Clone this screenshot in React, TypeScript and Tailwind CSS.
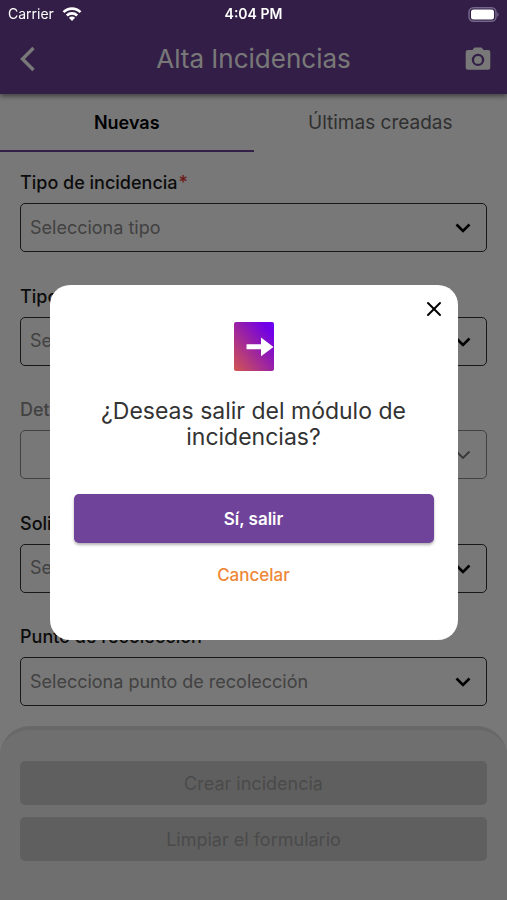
import { useState } from 'react';
import { X } from 'lucide-react';

const FIELDS = [
  { id: 'tipo', label: 'Tipo de incidencia', placeholder: 'Selecciona tipo', required: true },
  { id: 'servicio', label: 'Tipo de servicio', placeholder: 'Selecciona servicio' },
  { id: 'detalle', label: 'Detalle', placeholder: '', disabled: true },
  { id: 'solicitante', label: 'Solicitante', placeholder: 'Selecciona solicitante' },
  { id: 'punto', label: 'Punto de recolección', placeholder: 'Selecciona punto de recolección' },
];

function StatusBar() {
  // Sits above the dialog overlay so it stays bright
  return (
    <div className="relative z-20 grid h-7 grid-cols-3 items-center px-2 text-sm text-white">
      <div className="flex items-center gap-2">
        <span>Carrier</span>
        <svg viewBox="0 0 20 14" className="h-[14px] w-5" fill="none" stroke="currentColor" strokeWidth="2.6">
          <path d="M1.5 5.2C6.3.4 13.7.4 18.5 5.2" />
          <path d="M4.8 8.5c3-2.8 7.4-2.8 10.4 0" />
          <path d="M10 14 6.9 10.8c1.8-1.6 4.4-1.6 6.2 0z" fill="currentColor" stroke="none" />
        </svg>
      </div>
      <span className="text-center font-semibold">4:04 PM</span>
      <svg viewBox="0 0 31 15" className="h-[15px] w-[31px] justify-self-end">
        <rect x="1" y="0.75" width="27" height="13.5" rx="4.500" fill="none" stroke="#75678a" strokeWidth="1.5" />
        <rect x="3" y="2.500" width="23" height="10" rx="2.500" fill="#fff" />
        <path d="M29.300 5.200c1.800.8 1.800 3.800 0 4.600z" fill="#75678a" />
      </svg>
    </div>
  );
}

function Header() {
  return (
    <header className="relative bg-[#6a4095] shadow-[0_2px_5px_rgba(0,0,0,0.5)]">
      <StatusBar />
      <div className="flex h-[66px] items-center justify-between px-4 pb-1 text-white">
        <button type="button" aria-label="Volver" className="flex w-7 items-center">
          <svg viewBox="0 0 24 26" className="h-[26px] w-6" fill="none" stroke="currentColor" strokeWidth="3.4">
            <path d="M17.500 2 6.500 13l11 11" />
          </svg>
        </button>
        <h1 className="text-[26px] leading-8">Alta Incidencias</h1>
        <button type="button" aria-label="Cámara" className="flex w-7 justify-end">
          <svg viewBox="0 0 26 24" className="h-6 w-[26px]" fill="currentColor">
            <path
              fillRule="evenodd"
              d="M8.500 1.500 9.500.6h7l1 .9L18.500 3H23a2.300 2.300 0 0 1 2.300 2.300V20.500A2.300 2.300 0 0 1 23 22.800H3A2.300 2.300 0 0 1 .7 20.500V5.300A2.300 2.300 0 0 1 3 3h4.500zM13 6.700a6.200 6.200 0 1 0 0 12.400 6.200 6.200 0 0 0 0-12.400z"
            />
            <circle cx="13" cy="12.900" r="3.900" />
          </svg>
        </button>
      </div>
    </header>
  );
}

function SelectField({ id, label, placeholder, required, disabled }: any) {
  return (
    <div>
      <label htmlFor={id} className={`block text-lg leading-6 font-medium ${disabled ? 'text-[#8c8c8c]' : 'text-[#1a1a1a]'}`}>
        {label}
        {required && <span className="ml-px text-[#e53935]">*</span>}
      </label>
      <div className="relative mt-2">
        <select
          id={id}
          disabled={disabled}
          className={`h-[49px] w-full appearance-none rounded-[5px] border bg-transparent px-[9px] text-lg text-[#8c8c8c] ${
            disabled ? 'border-[#8c8c8c]' : 'border-[#333333]'
          }`}
        >
          <option>{placeholder}</option>
        </select>
        <svg
          viewBox="0 0 16 10"
          className={`pointer-events-none absolute top-5 right-4 h-[10px] w-4 ${disabled ? 'text-[#777777]' : 'text-black'}`}
          fill="none"
          stroke="currentColor"
          strokeWidth={disabled ? 1.8 : 2.6}
        >
          <path d="M1.500 1.500 8 8l6.500-6.500" />
        </svg>
      </div>
    </div>
  );
}

function ExitDialog({ onClose }: { onClose: () => void }) {
  return (
    <div className="fixed inset-0 z-10 flex items-center justify-center bg-black/53 px-[49px] pt-[25px]">
      <div
        role="dialog"
        aria-modal="true"
        aria-labelledby="exit-title"
        className="relative flex w-full max-w-[408px] flex-col items-center rounded-[20px] bg-white px-6 pt-[37px] pb-12"
      >
        <button type="button" aria-label="Cerrar" onClick={onClose} className="absolute top-3 right-3">
          <X className="h-6 w-6 text-black" strokeWidth={2} />
        </button>
        <svg viewBox="0 0 40 49" className="h-[49px] w-10">
          <defs>
            <linearGradient id="door" x1="0" y1="1" x2="1" y2="0">
              <stop offset="0" stopColor="#d2564f" />
              <stop offset="0.500" stopColor="#9a22a4" />
              <stop offset="0.850" stopColor="#7200e6" />
              <stop offset="1" stopColor="#6a00f4" />
            </linearGradient>
          </defs>
          <rect width="40" height="49" rx="2" fill="url(#door)" />
          <path d="M12.500 22.300H27V15.500L39.500 25 27 34.300V27.300H12.500z" fill="#fff" />
        </svg>
        <h2 id="exit-title" className="mt-[27px] text-center text-[23px] leading-[26px] text-[#333333]">
          ¿Deseas salir del módulo de incidencias?
        </h2>
        <button
          type="button"
          className="mt-11 h-[49px] w-full rounded-[5px] bg-[#6f4399] pt-0.5 text-[17px] font-semibold text-white shadow-[0_2px_3px_rgba(0,0,0,0.3)]"
        >
          Sí, salir
        </button>
        <button type="button" onClick={onClose} className="mt-[17px] h-8 px-4 text-[17px] font-medium text-[#ee8737]">
          Cancelar
        </button>
      </div>
    </div>
  );
}

export default function App() {
  const [dialogOpen, setDialogOpen] = useState(true);

  return (
    <div className="flex min-h-screen flex-col bg-white font-['Inter',sans-serif]">
      <Header />
      <nav className="grid grid-cols-2 text-lg">
        <button type="button" className="h-[58px] border-b-2 border-[#6f4399] pt-0.5 font-semibold text-black">
          Nuevas
        </button>
        <button type="button" className="h-[58px] border-b-2 border-transparent pt-0.5 text-[19px] text-[#666666]">
          Últimas creadas
        </button>
      </nav>

      <form className="flex flex-1 flex-col justify-between gap-4 px-5 pt-[19px] pb-5">
        {FIELDS.map((field) => (
          <SelectField key={field.id} {...field} />
        ))}
      </form>

      <footer className="flex flex-col gap-3 rounded-t-[30px] border-t-4 border-[#dedede] bg-[#ececec] px-5 pt-[31px] pb-[39px] text-lg text-[#9e9e9e]">
        <button type="button" disabled className="h-11 rounded-[5px] bg-[#cacaca] pt-0.5">
          Crear incidencia
        </button>
        <button type="button" disabled className="h-11 rounded-[5px] bg-[#cacaca] pt-0.5">
          Limpiar el formulario
        </button>
      </footer>

      {dialogOpen && <ExitDialog onClose={() => setDialogOpen(false)} />}
    </div>
  );
}
